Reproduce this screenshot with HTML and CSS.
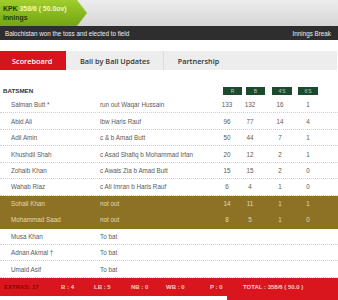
FILE: index.html
```html
<!DOCTYPE html>
<html lang="en">
<head>
  <meta charset="UTF-8" />
  <meta name="viewport" content="width=device-width, initial-scale=1" />
  <title>Scoreboard</title>
  <link rel="stylesheet" href="styles.css">
</head>
<body>

<div class="score-head">
  <div class="team-banner">
    <div class="team-line"><span class="team">KPK</span> <span class="runs">358/6 ( 50.0ov)</span></div>
    <div class="team-line">innings</div>
  </div>
</div>

<div class="status-bar">
  <span>Balochistan won the toss and elected to field</span>
  <span>Innings Break</span>
</div>

<div class="tabs">
  <div class="tab active">Scoreboard</div>
  <div class="tab">Ball by Ball Updates</div>
  <div class="tab">Partnership</div>
</div>

<div class="scorecard">
  <div class="bat-head">
    <span class="bat-title">BATSMEN</span>
    <div class="col-heads">
      <span class="col-head">R</span>
      <span class="col-head">B</span>
      <span class="col-head wide">4'S</span>
      <span class="col-head">6'S</span>
    </div>
  </div>

  <div id="rows"></div>

  <div class="extras">
    <span class="extras-total">EXTRAS: 17</span>
    <span class="ex-b">B : 4</span>
    <span class="ex-lb">LB : 5</span>
    <span class="ex-nb">NB : 0</span>
    <span class="ex-wb">WB : 0</span>
    <span class="ex-p">P : 0</span>
    <span class="ex-total">TOTAL : 358/6 ( 50.0 )</span>
  </div>
  <div class="next-strip"><span class="next-tab"></span></div>
</div>

<script>
  const batsmen = [
    ["Salman Butt *", "run out Waqar Hussain", 133, 132, 16, 1],
    ["Abid Ali", "lbw Haris Rauf", 96, 77, 14, 4],
    ["Adil Amin", "c & b Amad Butt", 50, 44, 7, 1],
    ["Khushdil Shah", "c Asad Shafiq b Mohammad Irfan", 20, 12, 2, 1],
    ["Zohaib Khan", "c Awais Zia b Amad Butt", 15, 15, 2, 0],
    ["Wahab Riaz", "c Ali Imran b Haris Rauf", 6, 4, 1, 0],
    ["Sohail Khan", "not out", 14, 11, 1, 1, true],
    ["Mohammad Saad", "not out", 8, 5, 1, 0, true],
    ["Musa Khan", "To bat"],
    ["Adnan Akmal \u2020", "To bat"],
    ["Umaid Asif", "To bat"]
  ];

  const rows = document.getElementById("rows");

  batsmen.forEach(b => {
    const row = document.createElement("div");
    row.className = "bat-row";
    if (b[6]) row.classList.add("at-crease");

    const cells = [b[0], b[1], b[2], b[3], b[4], b[5]];
    cells.forEach((val, i) => {
      const cell = document.createElement("span");
      cell.className = i < 2 ? "cell" : "cell num";
      cell.textContent = val === undefined ? "" : val;
      row.appendChild(cell);
    });

    rows.appendChild(row);
  });
</script>
</body>
</html>
```

FILE: styles.css
```css
* { box-sizing: border-box; }

body {
  margin: 0;
  background: #fff;
  font-family: 'Liberation Sans', Arial, sans-serif;
  color: #555;
}

/* top score strip */
.score-head {
  height: 26px;
  background: linear-gradient(#ececec, #d6d6d6);
}

.team-banner {
  width: 87px;
  height: 26px;
  padding: 4px 0 0 3px;
  background: linear-gradient(#9fcd2c, #73a513);
  clip-path: polygon(0 0, 77px 0, 87px 50%, 77px 100%, 0 100%);
  font-size: 6.9px;
  font-weight: bold;
  line-height: 9px;
  color: #233a05;
}

.runs { color: #f3f5c8; }

.status-bar {
  height: 14px;
  background: #2e2e2e;
  color: #eee;
  font-size: 6.3px;
  display: flex;
  justify-content: space-between;
  align-items: center;
  padding: 0 7px 0 5px;
}

/* tabs */
.tabs {
  display: flex;
  margin: 11px 1px 0 0;
  height: 19px;
  background: #ededed;
  font-family: 'Open Sans', sans-serif;
  font-weight: 600;
  font-size: 7.3px;
  color: #333;
}

.tab {
  display: flex;
  align-items: center;
  padding: 0 13px 0 14px;
  border-right: 1px solid #dcdcdc;
}

.tab:last-child { border-right: none; }

.tab.active {
  width: 66px;
  padding-left: 12px;
  background: #d7141d;
  color: #fff;
  border-right: none;
}

/* batting table */
.bat-head {
  display: flex;
  align-items: center;
  height: 13px;
  margin-top: 14px;
  padding: 0 20px 0 3px;
}

.bat-title {
  font-size: 6.2px;
  font-weight: bold;
  color: #333;
}

.col-heads {
  display: flex;
  margin-left: auto;
  gap: 4px;
}

.col-head {
  width: 19px;
  height: 8px;
  background: #1d4a2c;
  color: #b9cbbd;
  font-size: 5px;
  line-height: 8px;
  text-align: center;
}

.col-head.wide { width: 20px; margin-left: 3px; margin-right: 2px; }
.col-head:last-child { width: 20px; }

.bat-row {
  display: grid;
  grid-template-columns: 89px 115px 24px 22px 38px 18px;
  align-items: center;
  height: 16.45px;
  padding-left: 11px;
  border-bottom: 1px dotted #cfcfcf;
  font-size: 6.3px;
  color: #5a5a5a;
  white-space: nowrap;
}

.bat-row .num { text-align: center; }

.bat-row.at-crease {
  background: #8d7226;
  color: #e6d9a8;
  border-bottom-color: #8d7226;
}

/* extras */
.extras {
  display: flex;
  align-items: center;
  height: 18px;
  background: #d9161d;
  color: #f7c9c9;
  font-size: 6px;
  font-weight: bold;
  padding-left: 4px;
}

.extras-total { color: #7c0a0a; width: 57px; }
.ex-b { width: 33px; }
.ex-lb { width: 37px; }
.ex-nb { width: 35px; }
.ex-wb { width: 44px; }
.ex-p { width: 33px; }

.next-strip {
  height: 4px;
  padding-left: 227px;
}

.next-tab {
  display: block;
  height: 4px;
  background: #d9161d;
}
```
